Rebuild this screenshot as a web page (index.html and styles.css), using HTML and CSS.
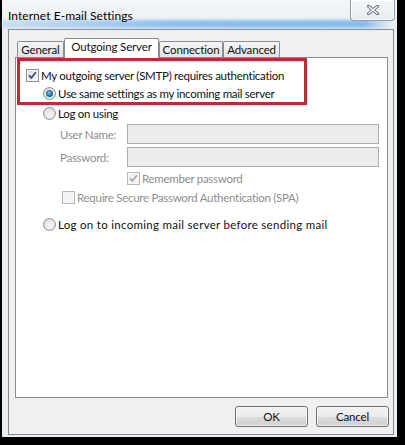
FILE: index.html
```html
<!DOCTYPE html>
<html>
<head>
<meta charset="utf-8">
<link rel="stylesheet" href="styles.css">
</head>
<body>
<div class="window">
  <div class="titlebar">
    <span class="title">Internet E-mail Settings</span>
    <button class="close" aria-label="Close">
      <svg width="12" height="10" viewBox="0 0 12 10">
        <path d="M1.5 1.2 L10.5 8.8 M10.5 1.2 L1.5 8.8" stroke="#6c7888" stroke-width="3.2" stroke-linecap="square" fill="none"/>
        <path d="M1.5 1.2 L10.5 8.8 M10.5 1.2 L1.5 8.8" stroke="#fbfcfd" stroke-width="1.3" stroke-linecap="butt" fill="none"/>
      </svg>
    </button>
  </div>
  <div class="client">
    <div class="tabs">
      <div class="tab tab-general">General</div>
      <div class="tab tab-outgoing active">Outgoing Server</div>
      <div class="tab tab-connection">Connection</div>
      <div class="tab tab-advanced">Advanced</div>
    </div>
    <div class="panel">
      <div class="row r1">
        <span class="cb"><svg width="11" height="11" viewBox="0 0 11 11"><path d="M2 5.3 L4.4 7.9 L8.9 2.2" stroke="#3d4f78" stroke-width="1.8" fill="none"/></svg></span>
        <span>My outgoing server (SMTP) requires authentication</span>
      </div>
      <div class="row r2">
        <span class="radio on"></span>
        <span>Use same settings as my incoming mail server</span>
      </div>
      <div class="row r3">
        <span class="radio"></span>
        <span>Log on using</span>
      </div>
      <div class="row field f1">
        <span class="lbl">User Name:</span>
        <span class="input"></span>
      </div>
      <div class="row field f2">
        <span class="lbl">Password:</span>
        <span class="input"></span>
      </div>
      <div class="row r6 disabled">
        <span class="cb dis"><svg width="11" height="11" viewBox="0 0 11 11"><path d="M2 5.3 L4.4 7.9 L8.9 2.2" stroke="#a9abae" stroke-width="1.8" fill="none"/></svg></span>
        <span>Remember password</span>
      </div>
      <div class="row r7 disabled">
        <span class="cb dis"></span>
        <span>Require Secure Password Authentication (SPA)</span>
      </div>
      <div class="row r8">
        <span class="radio"></span>
        <span class="wide">Log on to incoming mail server before sending mail</span>
      </div>
      <div class="highlight"></div>
    </div>
    <div class="buttons">
      <button class="btn">OK</button>
      <button class="btn">Cancel</button>
    </div>
  </div>
</div>
</body>
</html>
```

FILE: styles.css
```css
html, body {
  margin: 0;
  padding: 0;
}
body {
  background: #000;
  width: 405px;
  height: 445px;
  overflow: hidden;
  font-family: Lato, "Open Sans", sans-serif;
  font-size: 11.5px;
  letter-spacing: -0.28px;
  color: #111;
}
.window {
  margin-left: 2px;
  width: 395px;
  height: 437px;
  background: #e9eef3;
  display: flex;
  flex-direction: column;
}
.titlebar {
  position: relative;
  height: 29px;
  flex: none;
  display: flex;
  justify-content: space-between;
  align-items: flex-start;
  background: linear-gradient(to bottom, #f4f6f8 0, #eef2f5 18px, #e9eef3 29px);
}
.titlebar::before {
  content: "";
  position: absolute;
  left: 0;
  right: 5px;
  top: 20px;
  height: 8px;
  background: linear-gradient(to right, rgba(175, 208, 236, 0.55), rgba(135, 188, 236, 0.95) 45%, rgba(135, 188, 236, 1) 93%, rgba(150, 196, 236, 0));
  filter: blur(1.5px);
}
.title {
  position: relative;
  padding: 8px 0 0 6px;
  line-height: 16px;
  font-size: 12px;
  letter-spacing: 0.05px;
  color: #000;
}
.close {
  position: relative;
  margin: 0 2px 0 0;
  padding: 0;
  width: 45px;
  height: 21px;
  border: 1px solid #8d9aa9;
  border-top: none;
  border-radius: 0 0 4px 4px;
  background: linear-gradient(to bottom, #f6f8fa, #e6ebf0);
  box-shadow: inset 0 0 0 1px rgba(255, 255, 255, 0.8);
  display: flex;
  align-items: center;
  justify-content: center;
}
.close svg {
  display: block;
  margin-top: -1px;
}
.client {
  flex: none;
  margin: 0 3px 0 6px;
  height: 406px;
  box-sizing: border-box;
  border: 1px solid #858b91;
  background: #f0f0f0;
  padding-top: 8px;
  display: flex;
  flex-direction: column;
}
.tabs {
  display: flex;
  align-items: flex-end;
  height: 19px;
  margin-left: 8px;
  position: relative;
  z-index: 1;
}
.tab {
  box-sizing: border-box;
  height: 16px;
  line-height: 15px;
  border: 1px solid #898c95;
  border-bottom: none;
  border-radius: 2px 2px 0 0;
  background: linear-gradient(to bottom, #f5f5f5, #e4e4e4);
  text-align: center;
  white-space: nowrap;
  letter-spacing: -0.15px;
  color: #111;
}
.tab.active {
  height: 20px;
  margin-bottom: -1px;
  background: #fff;
}
.tab-general { width: 47px; }
.tab-outgoing { width: 95px; }
.tab-connection { width: 64px; }
.tab-advanced { width: 57px; }
.panel {
  position: relative;
  margin-left: 6px;
  width: 373px;
  height: 341px;
  box-sizing: border-box;
  border: 1px solid #898c95;
  background: #fff;
  padding-top: 9px;
  flex: none;
}
.row {
  display: flex;
  align-items: center;
  gap: 2px;
  height: 18px;
  white-space: nowrap;
}
.r1 { height: 17px; margin-left: 10px; }
.r2 { margin-left: 27px; }
.r3 { margin-left: 27px; margin-top: 2px; }
.field { height: 20px; margin-left: 44px; gap: 0; }
.f1 { margin-top: 2px; }
.f2 { margin-top: 3px; }
.r6 { margin-left: 111px; margin-top: 2px; }
.r7 { margin-left: 46px; margin-top: 1px; }
.r8 { margin-left: 27px; margin-top: 9px; }
.wide { letter-spacing: 0.29px; }
.disabled, .lbl { color: #8e8e8e; }
.lbl {
  width: 67px;
  flex: none;
}
.input {
  width: 252px;
  height: 20px;
  box-sizing: border-box;
  border: 1px solid #a9adb2;
  background: #ececec;
  flex: none;
}
.cb {
  width: 13px;
  height: 13px;
  flex: none;
  box-sizing: border-box;
  border: 1px solid #8e8f8f;
  background: linear-gradient(135deg, #d9dcdf, #f7f7f7);
  box-shadow: inset 0 0 0 1px #f6f6f6;
  display: flex;
  align-items: center;
  justify-content: center;
}
.cb svg { display: block; }
.cb.dis {
  border-color: #b6b8ba;
  background: #f3f3f3;
}
.radio {
  position: relative;
  width: 13px;
  height: 13px;
  flex: none;
  box-sizing: border-box;
  border: 1px solid #8e8f8f;
  border-radius: 50%;
  background: radial-gradient(circle at 55% 60%, #f7f7f7 0, #e4e4e4 55%, #cdcdcd 100%);
}
.radio.on::after {
  content: "";
  position: absolute;
  left: 2px;
  top: 2px;
  width: 7px;
  height: 7px;
  border-radius: 50%;
  background: radial-gradient(circle at 45% 40%, #7cc7ea 0, #2a79ad 45%, #123d61 100%);
}
.highlight {
  position: absolute;
  left: 1px;
  top: 0;
  width: 290px;
  height: 47px;
  box-sizing: border-box;
  border: 3px solid #bf2a33;
}
.buttons {
  display: flex;
  justify-content: flex-end;
  gap: 8px;
  margin-top: 8px;
  padding-right: 4px;
}
.btn {
  width: 73px;
  height: 21px;
  box-sizing: border-box;
  border: 1px solid #707070;
  border-radius: 3px;
  background: linear-gradient(to bottom, #f2f2f2 0, #ebebeb 50%, #dddddd 50%, #cfcfcf 100%);
  box-shadow: inset 0 0 0 1px rgba(255, 255, 255, 0.6);
  font-family: Lato, "Open Sans", sans-serif;
  font-size: 11.5px;
  letter-spacing: -0.15px;
  color: #111;
  padding: 0;
  line-height: 17px;
}
```
